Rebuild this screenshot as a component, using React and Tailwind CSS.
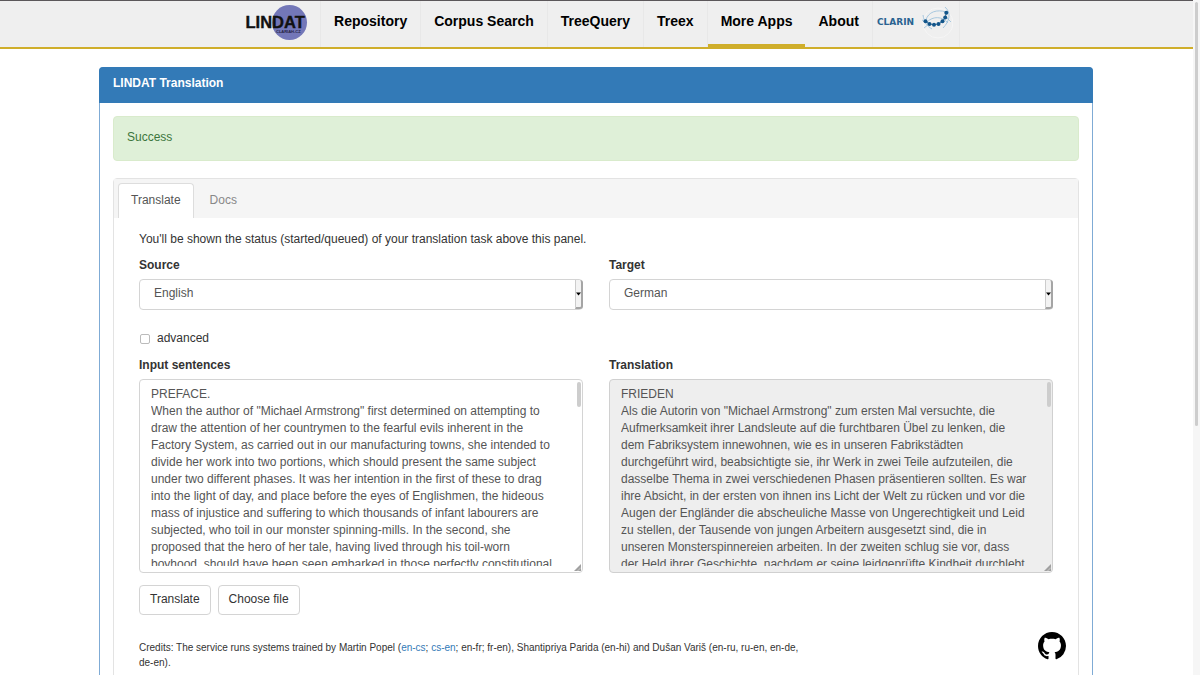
import React from "react";

const SOURCE_TEXT = `PREFACE.
When the author of "Michael Armstrong" first determined on attempting to
draw the attention of her countrymen to the fearful evils inherent in the
Factory System, as carried out in our manufacturing towns, she intended to
divide her work into two portions, which should present the same subject
under two different phases. It was her intention in the first of these to drag
into the light of day, and place before the eyes of Englishmen, the hideous
mass of injustice and suffering to which thousands of infant labourers are
subjected, who toil in our monster spinning-mills. In the second, she
proposed that the hero of her tale, having lived through his toil-worn
boyhood, should have been seen embarked in those perfectly constitutional`;

const TARGET_TEXT = `FRIEDEN
Als die Autorin von "Michael Armstrong" zum ersten Mal versuchte, die
Aufmerksamkeit ihrer Landsleute auf die furchtbaren Übel zu lenken, die
dem Fabriksystem innewohnen, wie es in unseren Fabrikstädten
durchgeführt wird, beabsichtigte sie, ihr Werk in zwei Teile aufzuteilen, die
dasselbe Thema in zwei verschiedenen Phasen präsentieren sollten. Es war
ihre Absicht, in der ersten von ihnen ins Licht der Welt zu rücken und vor die
Augen der Engländer die abscheuliche Masse von Ungerechtigkeit und Leid
zu stellen, der Tausende von jungen Arbeitern ausgesetzt sind, die in
unseren Monsterspinnereien arbeiten. In der zweiten schlug sie vor, dass
der Held ihrer Geschichte, nachdem er seine leidgeprüfte Kindheit durchlebt`;

const NAV = ["Repository", "Corpus Search", "TreeQuery", "Treex", "More Apps", "About"];

function LindatLogo() {
  return (
    <svg width="64" height="38" viewBox="0 0 64 38" role="img" aria-label="LINDAT">
      <circle cx="44.5" cy="17.5" r="17.5" fill="#7377b8" />
      <text x="0.5" y="22.5" fontFamily="Liberation Sans, sans-serif" fontSize="16.5" fill="#111" stroke="#111" strokeWidth="0.4">
        LINDAT
      </text>
      <text x="31" y="28" fontFamily="Liberation Sans, sans-serif" fontWeight="bold" fontSize="4" fill="#23233f">
        CLARIAH-CZ
      </text>
    </svg>
  );
}

function ClarinLogo() {
  const dots = [[48.5, 20.3], [52.5, 23], [57, 23.7], [61.5, 23], [65.5, 20.3], [68.2, 16.5], [69.3, 11.7]];
  return (
    <svg width="76" height="44" viewBox="0 0 76 44" role="img" aria-label="CLARIN">
      <text x="0" y="24" fontFamily="DejaVu Sans, sans-serif" fontWeight="bold" fontSize="9" fill="#2a6391">
        CLARIN
      </text>
      <circle cx="61" cy="22" r="15" fill="none" stroke="#f6f6f6" />
      <g fill="none" stroke="#9fc3dc" strokeWidth="0.9">
        <path d="M49 19C51 11 60 8 69 11" />
        <path d="M50 21C56 15 65 15 71 22" />
        <path d="M46 14C47 21 50 25 55 28" />
        <path d="M68 6C75 12 72 21 66 27" />
        <path d="M45 19L52 23L47 27" />
        <path d="M68 15L74 21" />
      </g>
      <polyline points={dots.map((d) => d.join(",")).join(" ")} fill="none" stroke="#12558a" strokeWidth="0.8" />
      {dots.map(([x, y]) => (
        <circle key={x} cx={x} cy={y} r="2" fill="#12558a" />
      ))}
    </svg>
  );
}

function Header() {
  return (
    <header className="border-t border-b-2 border-t-[#5b575a] border-b-[#cfae2b] bg-[#efefef]">
      <nav className="flex h-[46px] justify-center text-[14px] font-bold text-black">
        <a href="#home" className="flex items-center border-r border-[#e8e8e8] pr-[11px] pl-3">
          <LindatLogo />
        </a>
        {NAV.map((item) => (
          <a
            key={item}
            href="#nav"
            className={
              item === "More Apps"
                ? "flex items-start border-b-[3px] border-[#cfae2b] px-[13px] pt-[10px] leading-[20px]"
                : "flex items-start border-r border-[#e8e8e8] px-[13px] pt-[10px] leading-[20px]"
            }
          >
            {item}
          </a>
        ))}
        <a href="#clarin" className="flex items-start border-r border-[#e8e8e8] pr-[6px] pl-1">
          <ClarinLogo />
        </a>
      </nav>
    </header>
  );
}

function SelectField({ id, label, value }) {
  return (
    <div>
      <label htmlFor={id} className="block font-bold">{label}</label>
      <div className="relative mt-[5px]">
        <select
          id={id}
          defaultValue={value}
          className="block h-[31px] w-full appearance-none rounded-[4px] border border-[#d4d4d4] bg-white pr-4 pb-[3px] pl-[14px] text-[#555]"
        >
          <option>{value}</option>
        </select>
        <span className="pointer-events-none absolute inset-y-px right-0 flex w-2 items-center justify-center rounded-r-[3px] border-r-2 border-b-2 border-l border-[#a5a5a5] border-l-[#ccc] bg-[#f3f3f3]">
          <svg width="5" height="4" viewBox="0 0 5 4" className="shrink-0"><path d="M0 0.5H5L2.5 3.5Z" fill="#000" /></svg>
        </span>
      </div>
    </div>
  );
}

function TextPanel({ id, label, text, readOnly }) {
  return (
    <div>
      <label htmlFor={id} className="block font-bold">{label}</label>
      <div
        className={
          readOnly
            ? "relative mt-[5px] rounded-[4px] border border-[#d0d0d0] bg-[#eee] py-[6px] pl-[11px]"
            : "relative mt-[5px] rounded-[4px] border border-[#d4d4d4] bg-white py-[6px] pl-[11px]"
        }
      >
        <textarea
          id={id}
          readOnly={readOnly}
          defaultValue={text}
          className="block h-[180px] w-full resize-none overflow-hidden bg-transparent leading-[17px] whitespace-pre text-[#555] outline-none"
        />
        <span className="absolute top-[2px] right-px h-[25px] w-1 rounded-full bg-[#cdcdcd]" />
        <svg className="absolute right-px bottom-px" width="7" height="7" viewBox="0 0 7 7">
          <path d="M7 0V7H0Z" fill="#a0a0a0" />
          <path d="M7 3.5L3.5 7" stroke="#ddd" strokeWidth="0.7" />
        </svg>
      </div>
    </div>
  );
}

function GitHubMark() {
  return (
    <svg width="28" height="28" viewBox="0 0 16 16" fill="currentColor" aria-hidden="true">
      <path d="M8 0C3.58 0 0 3.58 0 8c0 3.54 2.29 6.53 5.47 7.59.4.07.55-.17.55-.38 0-.19-.01-.82-.01-1.49-2.01.37-2.53-.49-2.69-.94-.09-.23-.48-.94-.82-1.13-.28-.15-.68-.52-.01-.53.63-.01 1.08.58 1.23.82.72 1.21 1.87.87 2.33.66.07-.52.28-.87.51-1.07-1.78-.2-3.64-.89-3.64-3.95 0-.87.31-1.59.82-2.15-.08-.2-.36-1.02.08-2.12 0 0 .67-.21 2.2.82.64-.18 1.32-.27 2-.27s1.36.09 2 .27c1.53-1.04 2.2-.82 2.2-.82.44 1.1.16 1.92.08 2.12.51.56.82 1.27.82 2.15 0 3.07-1.87 3.75-3.65 3.95.29.25.54.73.54 1.48 0 1.07-.01 1.93-.01 2.2 0 .21.15.46.55.38A8.01 8.01 0 0 0 16 8c0-4.42-3.58-8-8-8Z" />
    </svg>
  );
}

export default function App() {
  return (
    <div className="flex h-screen overflow-hidden bg-white font-['Liberation_Sans',Arial,sans-serif] text-[12px] leading-[18px] text-[#333]">
      <div className="min-w-0 flex-1">
        <Header />
        <main className="pt-[18px] pr-[100px] pl-[99px]">
          <section className="rounded-[4px] border border-[#7fabd5]">
            <h1 className="-mx-px -mt-px rounded-t-[4px] bg-[#337ab7] px-[14px] pt-[7px] pb-[11px] font-bold text-white">LINDAT Translation</h1>
            <div className="p-[13px]">
              <div role="status" className="rounded-[4px] border border-[#d9ebcc] bg-[#dff0d8] px-[13px] pt-[11px] pb-[14px] text-[#3c763d]">
                Success
              </div>
              <div className="mt-[17px] rounded-[4px] border border-[#e3e3e3]">
                <div role="tablist" className="flex bg-[#f5f5f5] pt-1 pl-1">
                  <button role="tab" aria-selected="true" className="rounded-t-[4px] border border-b-0 border-[#ddd] bg-white px-3 pt-[7px] pb-[9px] text-[#555]">
                    Translate
                  </button>
                  <button role="tab" aria-selected="false" className="px-4 pt-[8px] pb-[9px] text-[#888]">Docs</button>
                </div>
                <div className="px-[25px] pt-3 pb-[26px]">
                  <p>You'll be shown the status (started/queued) of your translation task above this panel.</p>
                  <div className="mt-[8px] grid grid-cols-2 gap-[26px]">
                    <SelectField id="source" label="Source" value="English" />
                    <SelectField id="target" label="Target" value="German" />
                  </div>
                  <div className="mt-[19px] flex items-center gap-[7px]">
                    <input id="advanced" type="checkbox" className="mt-[2px] ml-[1px] size-[10px] appearance-none rounded-[2px] border border-[#bbb] bg-white" />
                    <label htmlFor="advanced">advanced</label>
                  </div>
                  <div className="mt-[9px] grid grid-cols-2 gap-[26px]">
                    <TextPanel id="input-text" label="Input sentences" text={SOURCE_TEXT} readOnly={false} />
                    <TextPanel id="output-text" label="Translation" text={TARGET_TEXT} readOnly />
                  </div>
                  <div className="mt-3 flex gap-[7px]">
                    <button className="rounded-[4px] border border-[#d4d4d4] bg-white px-[10px] pt-[4px] pb-[6px]">Translate</button>
                    <button className="rounded-[4px] border border-[#d4d4d4] bg-white px-[10px] pt-[4px] pb-[6px]">Choose file</button>
                  </div>
                  <footer className="mt-[17px] flex items-start justify-between">
                    <p className="mt-[8px] max-w-[686px] text-[10px] leading-[15px]">
                      Credits: The service runs systems trained by Martin Popel (<a href="#en-cs" className="text-[#337ab7]">en-cs</a>;{" "}
                      <a href="#cs-en" className="text-[#337ab7]">cs-en</a>; en-fr; fr-en), Shantipriya Parida (en-hi) and Dušan Variš (en-ru, ru-en, en-de,{" "}
                      <span className="inline-block">de-en).</span>
                    </p>
                    <a href="#github" aria-label="GitHub" className="-mr-[13px] text-black">
                      <GitHubMark />
                    </a>
                  </footer>
                </div>
              </div>
            </div>
          </section>
        </main>
      </div>
      <div aria-hidden="true" className="w-[7px] bg-[#f6f6f6] px-[2px] pt-[2px]">
        <div className="h-[424px] rounded-full bg-[#cdcdcd]" />
      </div>
    </div>
  );
}
